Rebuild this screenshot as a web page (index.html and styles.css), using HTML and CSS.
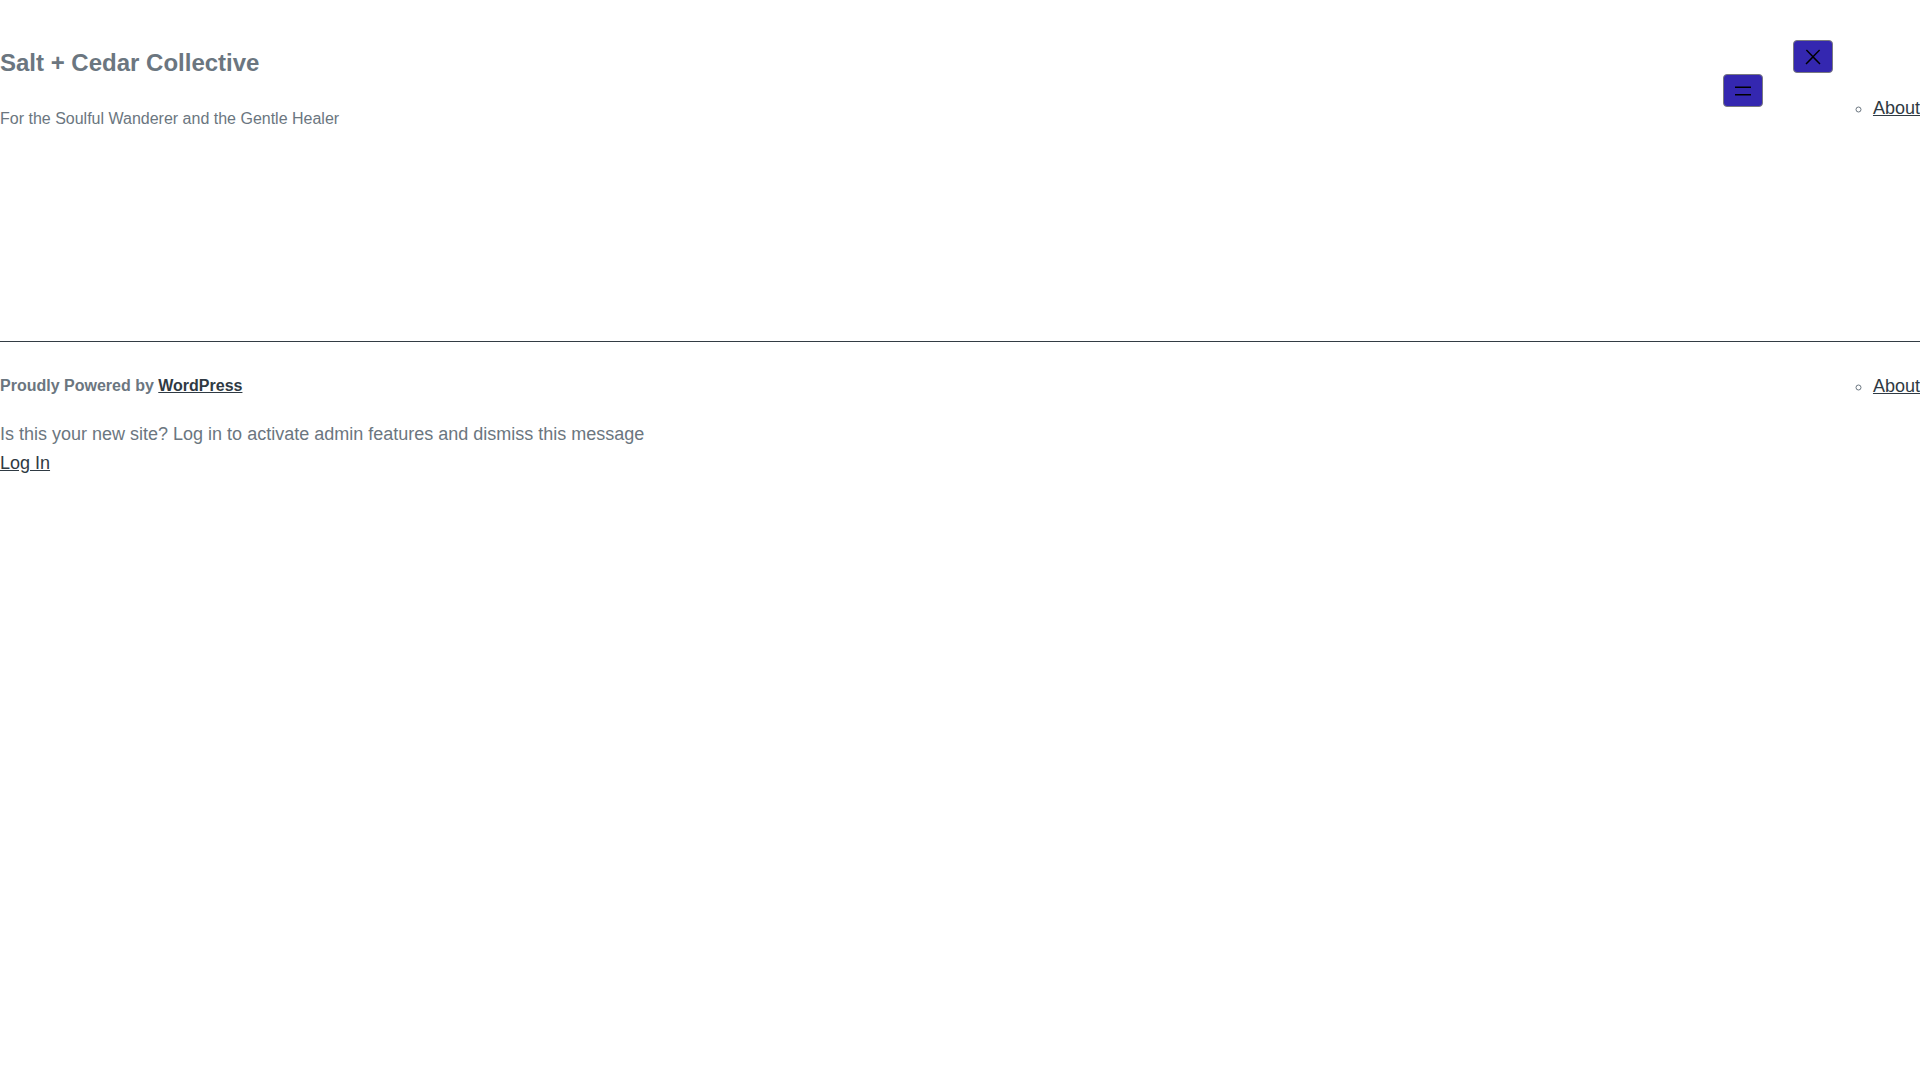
FILE: index.html
```html
<!DOCTYPE html>
<html lang="en">
<head>
<meta charset="utf-8">
<title>Salt + Cedar Collective</title>
<link rel="stylesheet" href="styles.css">
</head>
<body>
<header class="site-header">
  <div class="branding">
    <p class="site-title">Salt + Cedar Collective</p>
    <p class="site-tagline">For the Soulful Wanderer and the Gentle Healer</p>
  </div>
  <nav class="site-nav">
    <button class="nav-btn nav-open" aria-label="Open menu">
      <svg width="24" height="24" viewBox="0 0 24 24"><rect x="4" y="7.5" width="16" height="1.5"/><rect x="4" y="15" width="16" height="1.5"/></svg>
    </button>
    <button class="nav-btn nav-close" aria-label="Close menu">
      <svg width="24" height="24" viewBox="0 0 24 24"><path d="M13 11.8l6.1-6.3-1-1-6.1 6.2-6.1-6.2-1 1 6.1 6.3-6.5 6.7 1 1 6.5-6.6 6.5 6.6 1-1z"/></svg>
    </button>
    <ul class="menu menu-header">
      <li><a href="#">About</a></li>
    </ul>
  </nav>
</header>
<footer class="site-footer">
  <p class="powered">Proudly Powered by <a href="#">WordPress</a></p>
  <ul class="menu menu-footer">
    <li><a href="#">About</a></li>
  </ul>
</footer>
<div class="notice">
  <p class="notice-text">Is this your new site? Log in to activate admin features and dismiss this message</p>
  <a class="notice-link" href="#">Log In</a>
</div>
</body>
</html>
```

FILE: styles.css
```css
html, body {
  margin: 0;
  padding: 0;
  background: #ffffff;
}
body {
  width: 1920px;
  overflow-x: hidden;
  font-family: "Liberation Sans", Arial, sans-serif;
  color: #6b7680;
}
a {
  color: #2f3a43;
  text-decoration: underline;
}
.site-header {
  display: flex;
  justify-content: space-between;
  align-items: flex-start;
  height: 341px;
  box-sizing: border-box;
}
.branding {
  padding-top: 51px;
}
.site-title {
  margin: 0;
  font-size: 24px;
  line-height: 24px;
  font-weight: bold;
  color: #6b7680;
}
.site-tagline {
  margin: 36px 0 0;
  font-size: 16px;
  line-height: 16px;
  color: #6b7680;
}
.site-nav {
  display: flex;
  align-items: flex-start;
}
.nav-btn {
  display: block;
  padding: 3.5px 7px;
  border: 1px solid #7a7a80;
  border-radius: 4px;
  background: #3427b0;
  color: #000000;
  fill: #000000;
  cursor: pointer;
}
.nav-btn svg {
  display: block;
}
.nav-open {
  margin-top: 74px;
}
.nav-close {
  margin-top: 40px;
  margin-left: 30px;
}
.menu {
  margin: 0;
  padding-left: 40px;
  list-style: circle;
  font-size: 18px;
  line-height: 18px;
}
.menu-header {
  margin-top: 99px;
}
.site-footer {
  display: flex;
  justify-content: space-between;
  align-items: flex-start;
  border-top: 1px solid #333c44;
  padding-top: 35px;
}
.powered {
  margin: 1px 0 0;
  font-size: 16px;
  line-height: 16px;
  font-weight: bold;
  color: #6b7680;
}
.notice {
  margin-top: 25px;
  font-size: 18px;
  line-height: 29px;
}
.notice-text {
  margin: 0;
  color: #6b7680;
}
.notice-link {
  color: #2f3a43;
}
```
